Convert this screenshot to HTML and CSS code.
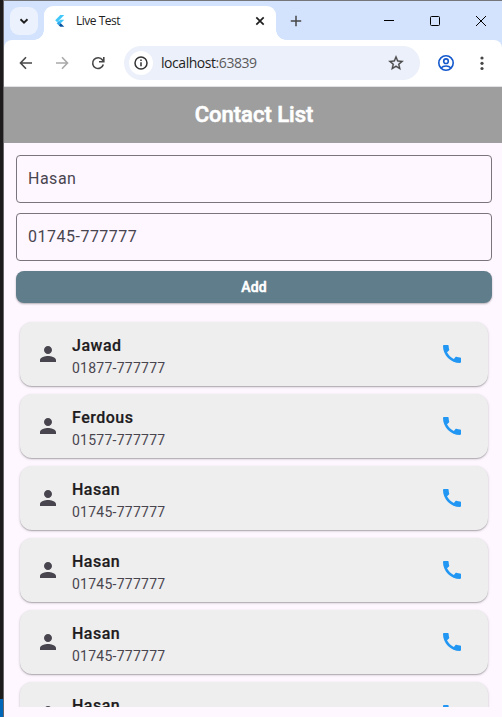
FILE: index.html
```html
<!DOCTYPE html>
<html lang="en">
<head>
<meta charset="utf-8">
<title>Live Test</title>
<link rel="stylesheet" href="styles.css">
</head>
<body>
<svg class="defs" width="0" height="0">
  <symbol id="person" viewBox="0 0 24 24"><path d="M12 12c2.21 0 4-1.79 4-4s-1.79-4-4-4-4 1.79-4 4 1.79 4 4 4zm0 2c-2.67 0-8 1.34-8 4v2h16v-2c0-2.66-5.33-4-8-4z"/></symbol>
  <symbol id="phone" viewBox="0 0 24 24"><path d="M20.01 15.38c-1.23 0-2.42-.2-3.53-.56-.35-.12-.74-.03-1.01.24l-1.57 1.97c-2.83-1.35-5.48-3.9-6.89-6.83l1.95-1.66c.27-.28.35-.67.24-1.02-.37-1.11-.56-2.3-.56-3.53 0-.54-.45-.99-.99-.99H4.19C3.65 3 3 3.24 3 3.99 3 13.28 10.73 21 20.01 21c.71 0 .99-.63.99-1.18v-3.45c0-.54-.45-.99-.99-.99z"/></symbol>
</svg>
<div class="desktop"></div>
<div class="window">
  <div class="tabstrip">
    <div class="tab-search"><svg width="12" height="12" viewBox="0 0 12 12"><path d="M2.5 4.2 6 7.6l3.5-3.4" fill="none" stroke="#1f1f1f" stroke-width="1.9"/></svg></div>
    <div class="tab">
      <svg class="favicon" width="16" height="16" viewBox="0 0 16 16"><path d="M8.300 2h4L5.200 9.200l-2-2z" fill="#40c8fa"/><path d="M8.300 6.700h4L8.200 10.700l-2-2z" fill="#40c8fa"/><path d="M4.700 10.200l2-2 2 2-2 2z" fill="#29a8ee"/><path d="M6.700 12.200l2-2 3.600 3.600h-4z" fill="#0553a1"/></svg>
      <span class="tab-title">Live Test</span>
      <svg class="tab-close" width="10" height="10" viewBox="0 0 10 10"><path d="m1.300 1.300 7.400 7.400m0-7.400-7.400 7.400" stroke="#1f1f1f" stroke-width="1.7"/></svg>
    </div>
    <svg class="new-tab" width="12" height="12" viewBox="0 0 12 12"><path d="M6 .8v10.400M.8 6h10.400" stroke="#474747" stroke-width="1.500"/></svg>
    <div class="controls">
      <svg width="10" height="10"><path d="M0 4.500h10" stroke="#000"/></svg>
      <svg width="10" height="10"><rect x=".5" y=".5" width="9" height="9" rx="1" fill="none" stroke="#000"/></svg>
      <svg width="10" height="10"><path d="m0 0 10 10M10 0 0 10" stroke="#000"/></svg>
    </div>
  </div>
  <div class="toolbar-wrap">
  <div class="toolbar">
    <svg class="nav back" width="16" height="16" viewBox="0 0 16 16"><path d="M14 8H3m5-5.700L2.500 8 8 13.700" /></svg>
    <svg class="nav forward" width="16" height="16" viewBox="0 0 16 16"><path d="M2 8h11M8 2.300 13.500 8 8 13.700"/></svg>
    <svg class="nav reload" width="16" height="16" viewBox="0 0 16 16"><path d="M13.300 9.500A5.400 5.400 0 1 1 12.500 5l1 1.500M13.800 2v4.800H9"/></svg>
    <div class="address">
      <div class="info"><svg width="14" height="14" viewBox="0 0 14 14"><circle cx="7" cy="7" r="6" fill="none" stroke="#333" stroke-width="1.500"/><path d="M7 6.200v4M7 3.500V5" stroke="#333" stroke-width="1.500"/></svg></div>
      <span class="url">localhost<span class="port">:63839</span></span>
      <svg class="star" width="18" height="18" viewBox="0 0 24 24"><path d="m22 9.240-7.190-.62L12 2 9.190 8.630 2 9.240l5.460 4.730L5.820 21 12 17.270 18.180 21l-1.630-7.030L22 9.240zM12 15.400l-3.760 2.270 1-4.280-3.320-2.880 4.380-.38L12 6.100l1.710 4.040 4.380.38-3.320 2.880 1 4.280L12 15.400z" fill="#474747" stroke="#474747" stroke-width=".4"/></svg>
    </div>
    <svg class="profile" width="18" height="18" viewBox="0 0 18 18" fill="none" stroke="#1358cc" stroke-width="1.600"><circle cx="9" cy="9" r="7.200"/><circle cx="9" cy="7.200" r="2.300"/><path d="M4 14c2.500-2.700 7.500-2.700 10 0"/></svg>
    <svg class="menu" width="4" height="16" fill="#474747"><circle cx="2" cy="3" r="1.600"/><circle cx="2" cy="8.300" r="1.600"/><circle cx="2" cy="13.500" r="1.600"/></svg>
  </div>
  </div>
  <header class="appbar">Contact List</header>
  <main>
    <div class="field">Hasan</div>
    <div class="field">01745-777777</div>
    <div class="add">Add</div>
    <div class="list">
      <div class="card"><svg class="person"><use href="#person"/></svg><div class="text"><div class="name">Jawad</div><div class="number">01877-777777</div></div><svg class="phone"><use href="#phone"/></svg></div>
      <div class="card"><svg class="person"><use href="#person"/></svg><div class="text"><div class="name">Ferdous</div><div class="number">01577-777777</div></div><svg class="phone"><use href="#phone"/></svg></div>
      <div class="card"><svg class="person"><use href="#person"/></svg><div class="text"><div class="name">Hasan</div><div class="number">01745-777777</div></div><svg class="phone"><use href="#phone"/></svg></div>
      <div class="card"><svg class="person"><use href="#person"/></svg><div class="text"><div class="name">Hasan</div><div class="number">01745-777777</div></div><svg class="phone"><use href="#phone"/></svg></div>
      <div class="card"><svg class="person"><use href="#person"/></svg><div class="text"><div class="name">Hasan</div><div class="number">01745-777777</div></div><svg class="phone"><use href="#phone"/></svg></div>
      <div class="card"><svg class="person"><use href="#person"/></svg><div class="text"><div class="name">Hasan</div><div class="number">01745-777777</div></div><svg class="phone"><use href="#phone"/></svg></div>
    </div>
  </main>
</div>
</body>
</html>
```
FILE: styles.css
```css
* { box-sizing: border-box; }
body {
  margin: 0;
  width: 502px;
  height: 717px;
  overflow: hidden;
  display: flex;
  font-family: Roboto, sans-serif;
}
svg { display: block; flex: none; }
.defs { position: absolute; }
.desktop {
  width: 3px;
  background: linear-gradient(#1d1b1b 699px, #0067b8 699px);
}
.window {
  width: 499px;
  height: 717px;
  border-left: 1px solid #69676a;
  border-top: 1px solid #747679;
  background: #fef7ff;
  display: flex;
  flex-direction: column;
}
.tabstrip {
  height: 39px;
  flex: none;
  background: #d3e3fd;
  display: flex;
  align-items: center;
}
.tab-search {
  width: 28px;
  height: 28px;
  margin-left: 6px;
  border-radius: 9px;
  background: #ebf1fd;
  display: grid;
  place-items: center;
}
.tab {
  position: relative;
  width: 232px;
  height: 34px;
  margin-left: 6px;
  align-self: flex-end;
  border-radius: 9px 9px 0 0;
  background: #fff;
  display: flex;
  align-items: center;
  padding: 0 11px 5px 8px;
}
.tab::before, .tab::after {
  content: "";
  position: absolute;
  bottom: 0;
  width: 10px;
  height: 10px;
}
.tab::before { left: -10px; background: radial-gradient(circle at 0 0, transparent 9.5px, #fff 10px); }
.tab::after { right: -10px; background: radial-gradient(circle at 100% 0, transparent 9.5px, #fff 10px); }
.tab-title {
  margin-left: 8px;
  flex: 1;
  font: 12px/16px "Open Sans", sans-serif;
  letter-spacing: -0.5px;
  color: #1f1f1f;
}
.new-tab { margin-left: 14px; }
.controls {
  display: flex;
  gap: 36px;
  margin-left: auto;
  margin-right: 16px;
}
.toolbar-wrap { flex: none; background: #d3e3fd; }
.toolbar {
  height: 46px;
  background: #fff;
  border-radius: 8px 8px 0 0;
  display: flex;
  align-items: center;
  padding: 0 14px;
}
.nav { fill: none; stroke: #474747; stroke-width: 1.6; }
.forward { stroke: #a9a9a9; margin-left: 20px; }
.reload { margin-left: 20px; }
.address {
  width: 296px;
  height: 34px;
  margin-left: 18px;
  border-radius: 17px;
  background: #ecf0fa;
  display: flex;
  align-items: center;
  padding: 0 15px 0 5px;
}
.info {
  width: 24px;
  height: 24px;
  border-radius: 50%;
  background: #fff;
  display: grid;
  place-items: center;
}
.url {
  margin-left: 8px;
  flex: 1;
  font: 14px/20px "Open Sans", sans-serif;
  letter-spacing: -0.45px;
  color: #1f1f1f;
}
.port { color: #5a5a5a; }
.profile { margin-left: 17px; }
.menu { margin-left: auto; margin-right: 4px; }
.appbar {
  height: 57px;
  flex: none;
  border-top: 1px solid #e0e2e6;
  background: #9e9e9e;
  color: #fff;
  font-size: 22px;
  font-weight: 500;
  -webkit-text-stroke: 0.6px #fff;
  line-height: 56px;
  text-align: center;
  padding-left: 2px;
}
main {
  height: 564px;
  padding: 12px 10px 0 12px;
  display: flex;
  flex-direction: column;
}
.field {
  height: 48px;
  flex: none;
  margin-bottom: 10px;
  padding-left: 11px;
  border: 1px solid #79747e;
  border-radius: 4px;
  color: #49454f;
  font-size: 16px;
  line-height: 46px;
  letter-spacing: 0.5px;
}
.add {
  height: 32px;
  flex: none;
  border-radius: 8px;
  background: #607d8b;
  box-shadow: 0 1px 2px rgba(0,0,0,.3);
  color: #fff;
  font-size: 14px;
  font-weight: 500;
  -webkit-text-stroke: 0.5px #fff;
  letter-spacing: 0.1px;
  line-height: 32px;
  text-align: center;
}
.list {
  flex: 1;
  min-height: 0;
  margin-top: 15px;
  padding: 4px;
  overflow: hidden;
  display: flex;
  flex-direction: column;
  gap: 8px;
}
.card {
  height: 64px;
  flex: none;
  border-radius: 12px;
  background: #eee;
  box-shadow: 0 1px 3px rgba(0,0,0,.18), 0 1px 1px rgba(0,0,0,.2);
  display: flex;
  align-items: center;
  padding: 0 24px 0 16px;
}
.person { width: 24px; height: 24px; fill: #49454f; }
.phone { width: 24px; height: 24px; fill: #2196f3; }
.text { flex: 1; margin-left: 12px; padding-top: 4px; }
.name {
  color: #1d1b20;
  font-size: 16px;
  font-weight: 500;
  -webkit-text-stroke: 0.2px #1d1b20;
  line-height: 24px;
  letter-spacing: 0.5px;
}
.number {
  color: #49454f;
  font-size: 14px;
  line-height: 20px;
  letter-spacing: 0.25px;
}
```
